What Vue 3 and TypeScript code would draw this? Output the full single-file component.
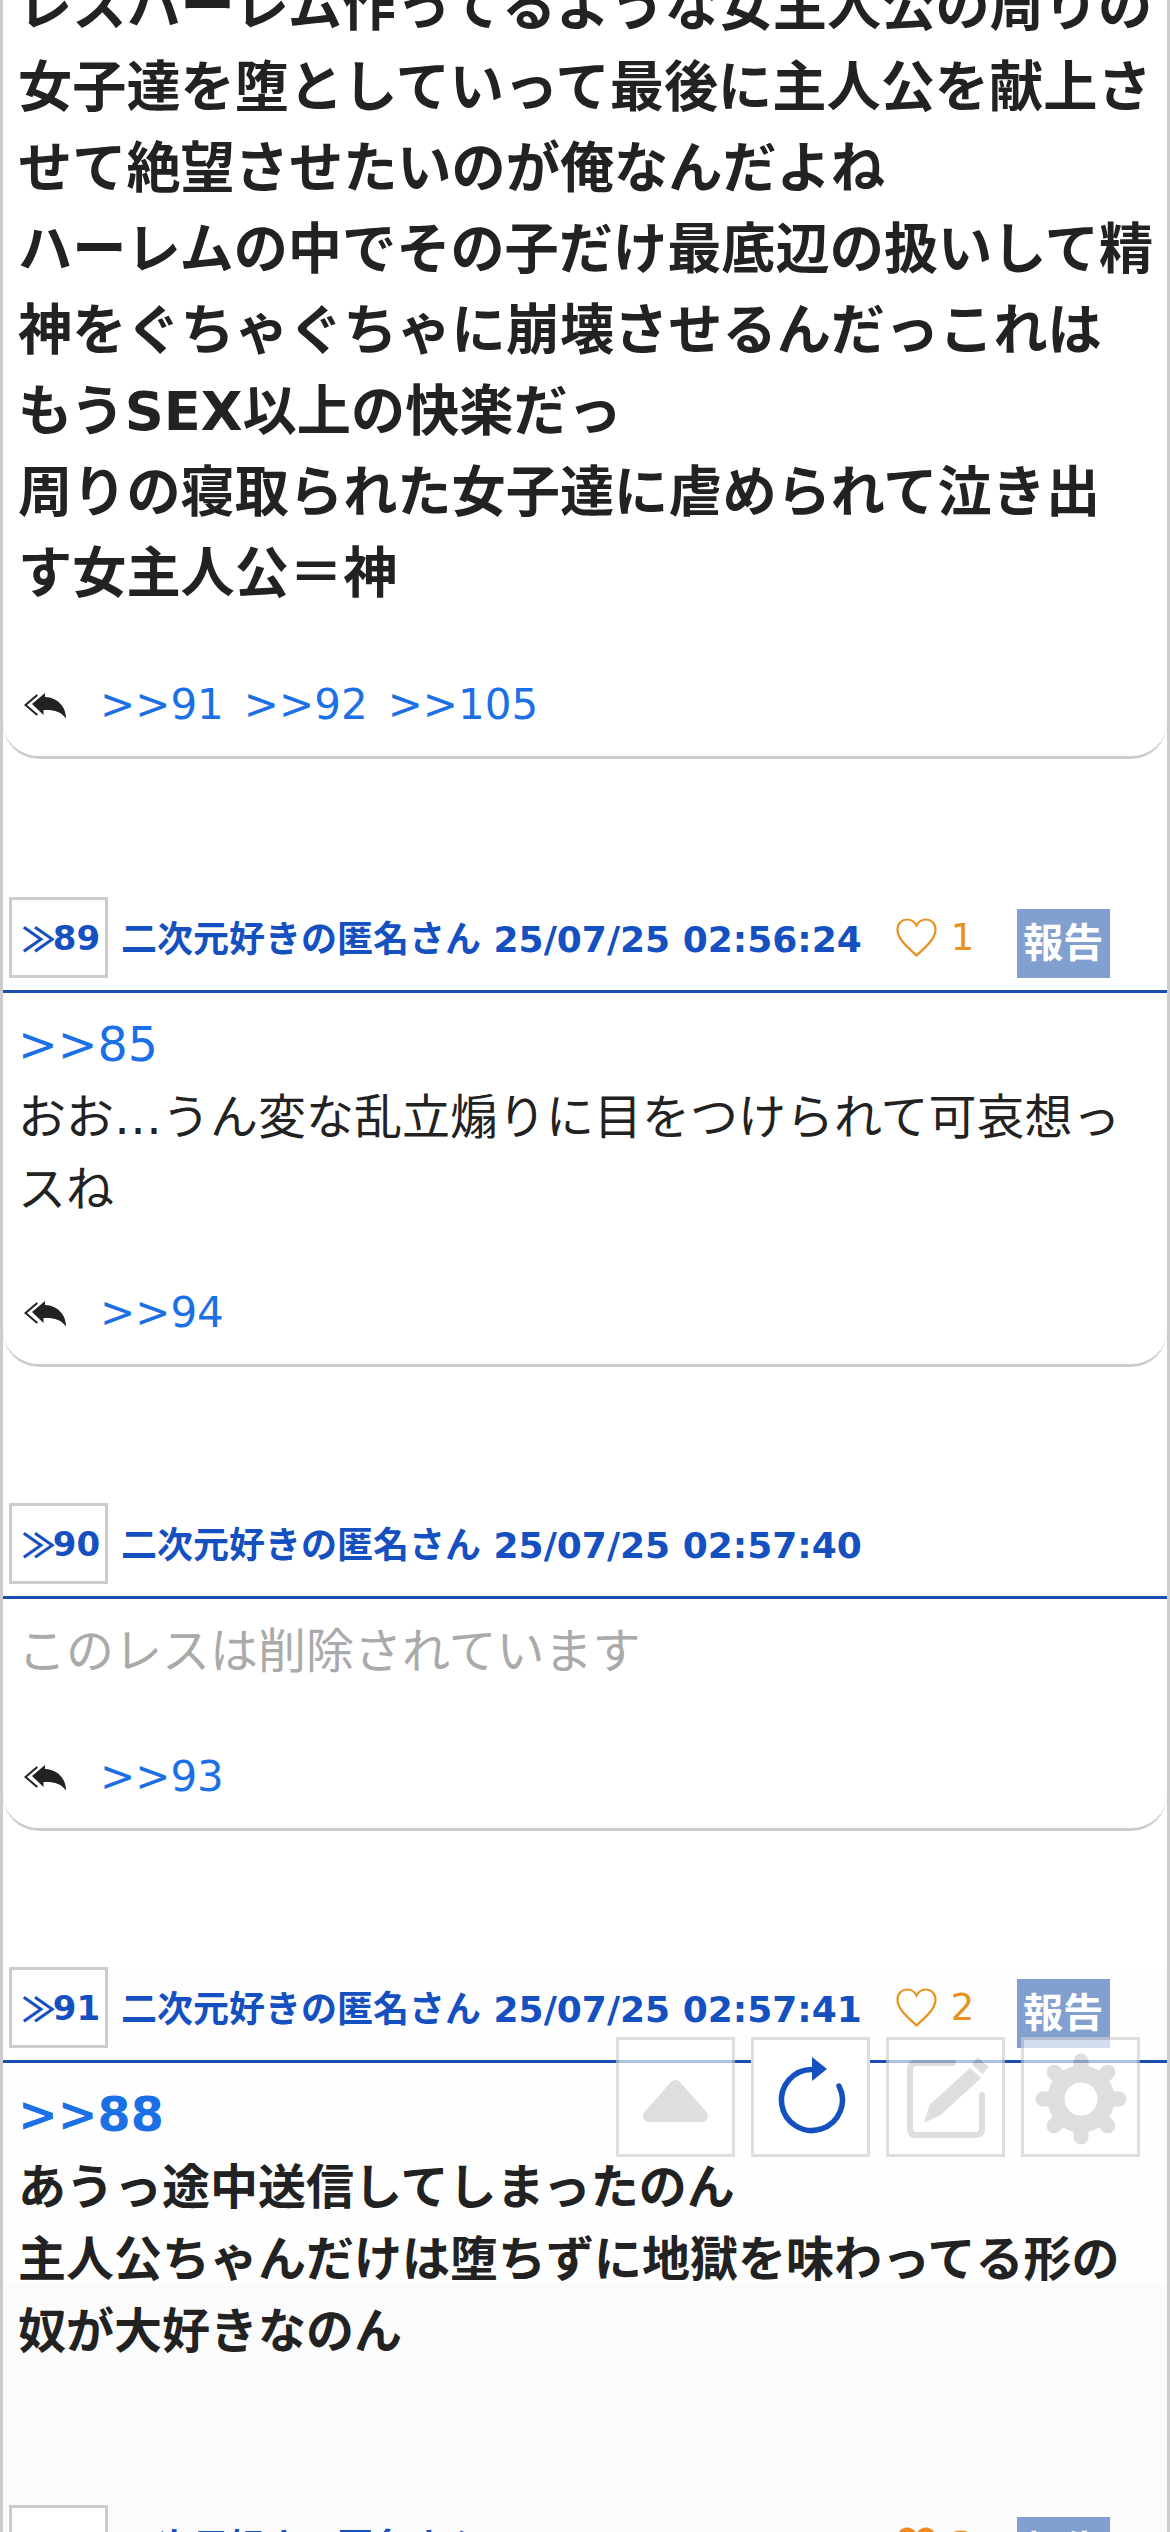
<template>
  <div class="page">
    <div class="thread">
      <article v-for="post in posts" :key="post.no" class="post" :class="post.style">
        <header v-if="post.no" class="post-head">
          <span class="num"><i class="mark">≫</i>{{ post.no }}</span>
          <span class="meta">二次元好きの匿名さん {{ post.date }}</span>
          <template v-if="post.likes">
            <span class="like">
              <svg class="heart" viewBox="0 0 41 39">
                <path
                  d="M20.5 37.5 C14 31 1.5 22 1.5 11.5 C1.5 5.5 6 1.5 11 1.5 C15 1.5 18.5 3.5 20.5 7.5 C22.5 3.5 26 1.5 30 1.5 C35 1.5 39.5 5.5 39.5 11.5 C39.5 22 27 31 20.5 37.5 Z"
                  fill="none"
                  stroke="#e8921e"
                  stroke-width="2.2"
                />
              </svg>
              {{ post.likes }}
            </span>
            <span class="report">報告</span>
          </template>
        </header>
        <div class="post-body">
          <div v-if="post.anchor" class="anchor">{{ post.anchor }}</div>
          <div class="text">{{ post.text }}</div>
        </div>
        <footer v-if="post.replies.length" class="replies">
          <svg class="reply-icon" viewBox="0 0 42 26">
            <path d="M13.3 2 L1.5 12 L13.3 22" fill="none" stroke="#222" stroke-width="2" />
            <path d="M21 0 L8 11 L19.5 22 L19.5 17 C30 16.5 37 18.5 42 25.5 C42 14 34 4.5 21 4 Z" fill="#222" />
          </svg>
          <span v-for="r in post.replies" :key="r" class="reply-link">&gt;&gt;{{ r }}</span>
        </footer>
      </article>
      <article class="post last">
        <header class="post-head">
          <span class="num"><i class="mark">≫</i>92</span>
          <span class="meta">二次元好きの匿名さん 25/07/25 02:58:10</span>
          <span class="like">
            <svg class="heart" viewBox="0 0 41 39">
              <path
                d="M20.5 37.5 C14 31 1.5 22 1.5 11.5 C1.5 5.5 6 1.5 11 1.5 C15 1.5 18.5 3.5 20.5 7.5 C22.5 3.5 26 1.5 30 1.5 C35 1.5 39.5 5.5 39.5 11.5 C39.5 22 27 31 20.5 37.5 Z"
                fill="#ee8a20"
              />
            </svg>
            3
          </span>
          <span class="report">報告</span>
        </header>
      </article>
    </div>

    <!-- 右下のフローティングボタン -->
    <div class="float-bar">
      <button class="float-btn">
        <svg viewBox="0 0 119 120">
          <path d="M59.5 49 L33 79 L86 79 Z" fill="#ccc" stroke="#ccc" stroke-width="12" stroke-linejoin="round" />
        </svg>
      </button>
      <button class="float-btn on">
        <svg viewBox="0 0 119 120">
          <path d="M88 49 A30.5 30.5 0 1 1 61 32.5" fill="none" stroke="#1450c0" stroke-width="5.5" stroke-linecap="round" />
          <path d="M61 20 L76 32 L61 44 Z" fill="#1450c0" />
        </svg>
      </button>
      <button class="float-btn">
        <svg viewBox="0 0 119 120">
          <path d="M67 26 H30 Q24 26 24 32 V92 Q24 98 30 98 H90 Q96 98 96 92 V58" fill="none" stroke="#ccc" stroke-width="6" stroke-linecap="round" />
          <path d="M38 86 L43.5 68 L84 31 L95 41 L54.6 78 Z" fill="#ccc" />
          <path d="M91.6 20 L102.7 30 L96.4 37 L86 27 Z" fill="#ccc" />
        </svg>
      </button>
      <button class="float-btn">
        <svg viewBox="0 0 119 120">
          <circle cx="60" cy="62" r="25" fill="none" stroke="#ccc" stroke-width="17" />
          <line
            v-for="a in gearAngles"
            :key="a"
            x1="60"
            y1="32"
            x2="60"
            y2="24"
            stroke="#ccc"
            stroke-width="15"
            stroke-linecap="round"
            :transform="`rotate(${a} 60 62)`"
          />
        </svg>
      </button>
    </div>
  </div>
</template>

<script setup lang="ts">
interface Post {
  no: number
  date: string
  likes: number
  anchor: string
  text: string
  style: string
  replies: number[]
}

const gearAngles = [0, 45, 90, 135, 180, 225, 270, 315]

const posts: Post[] = [
  {
    no: 0,
    date: '',
    likes: 0,
    anchor: '',
    text: 'レスハーレム作ってるような女主人公の周りの\n女子達を堕としていって最後に主人公を献上さ\nせて絶望させたいのが俺なんだよね\nハーレムの中でその子だけ最底辺の扱いして精\n神をぐちゃぐちゃに崩壊させるんだっこれは\nもうSEX以上の快楽だっ\n周りの寝取られた女子達に虐められて泣き出\nす女主人公＝神',
    style: 'big',
    replies: [91, 92, 105]
  },
  {
    no: 89,
    date: '25/07/25 02:56:24',
    likes: 1,
    anchor: '>>85',
    text: 'おお…うん変な乱立煽りに目をつけられて可哀想っ\nスね',
    style: '',
    replies: [94]
  },
  {
    no: 90,
    date: '25/07/25 02:57:40',
    likes: 0,
    anchor: '',
    text: 'このレスは削除されています',
    style: 'deleted',
    replies: [93]
  },
  {
    no: 91,
    date: '25/07/25 02:57:41',
    likes: 2,
    anchor: '>>88',
    text: 'あうっ途中送信してしまったのん\n主人公ちゃんだけは堕ちずに地獄を味わってる形の\n奴が大好きなのん',
    style: 'strong',
    replies: []
  }
]
</script>

<style scoped>
.page {
  height: 2532px;
  overflow: hidden;
  background: #fff;
  font-family: "DejaVu Sans", "Noto Sans CJK JP", sans-serif;
  color: #222;
}

.thread {
  margin-top: -34px;
  border-left: 3px solid #ccc;
  border-right: 3px solid #ccc;
}

.post {
  margin-bottom: 136px;
}

.post.big {
  margin-bottom: 138px;
}

.post.strong {
  margin-bottom: 0;
  padding-bottom: 138px;
  background: linear-gradient(#fefefe 317px, #fbfbfb 317px);
}

.post.last {
  margin-bottom: 0;
  background: #fbfbfb;
}

.post-head {
  display: flex;
  align-items: center;
  padding: 0 0 12px 6px;
  border-bottom: 3px solid #1a4fb0;
}

.num {
  box-sizing: border-box;
  width: 99px;
  height: 81px;
  padding-left: 5px;
  border: 3px solid #ccc;
  background: #fff;
  display: flex;
  align-items: center;
  justify-content: center;
  font-size: 34px;
  font-weight: bold;
  color: #1450c0;
  white-space: nowrap;
}

.mark {
  font-family: "Noto Sans CJK JP", sans-serif;
  font-style: normal;
  font-weight: bold;
  letter-spacing: -3px;
}

.meta {
  margin: 0 0 3px 13px;
  font-size: 36px;
  font-weight: bold;
  color: #1450c0;
  white-space: nowrap;
}

.like {
  display: flex;
  align-items: center;
  gap: 14px;
  margin-left: 34px;
  width: 116px;
  font-size: 37px;
  color: #e8921e;
}

.heart {
  width: 41px;
  height: 39px;
}

.report {
  box-sizing: border-box;
  width: 93px;
  height: 69px;
  margin: 12px 0 0 5px;
  padding-bottom: 8px;
  display: flex;
  align-items: center;
  justify-content: center;
  background: #81a0cf;
  color: #fff;
  font-size: 40px;
  font-weight: bold;
}

.post-body {
  padding: 16px 16px 0 15px;
  font-size: 48px;
  line-height: 72px;
  white-space: pre;
}

.anchor {
  font-size: 47.5px;
  color: #1a70e4;
}

.big .post-body {
  padding-top: 0;
  font-size: 54.2px;
  line-height: 81px;
  font-weight: bold;
}

.strong .post-body {
  font-weight: bold;
}

.deleted .post-body {
  padding-bottom: 2px;
  color: #aaa;
}

.replies {
  display: flex;
  align-items: center;
  height: 40px;
  margin-top: 69px;
  padding: 0 0 30px 21px;
  border-bottom: 3px solid #ccc;
  border-radius: 0 0 36px 36px;
}

.big .replies {
  margin-top: 72px;
}

.reply-icon {
  width: 42px;
  height: 26px;
  margin-right: 34px;
}

.reply-link {
  margin: 0 20px 3px 0;
  font-size: 42px;
  color: #1a70e4;
}

.float-bar {
  position: fixed;
  right: 30px;
  top: 2037px;
  display: flex;
  gap: 16px;
}

.float-btn {
  box-sizing: border-box;
  width: 119px;
  height: 120px;
  padding: 0;
  border: 3px solid #ccc;
  background: #fff;
  opacity: 0.65;
}

.float-btn.on {
  opacity: 1;
  border-color: #ddd;
}

.float-btn svg {
  display: block;
  width: 119px;
  height: 120px;
  margin: -3px;
}
</style>

<style>
html,
body {
  margin: 0;
  background: #fff;
}
</style>
